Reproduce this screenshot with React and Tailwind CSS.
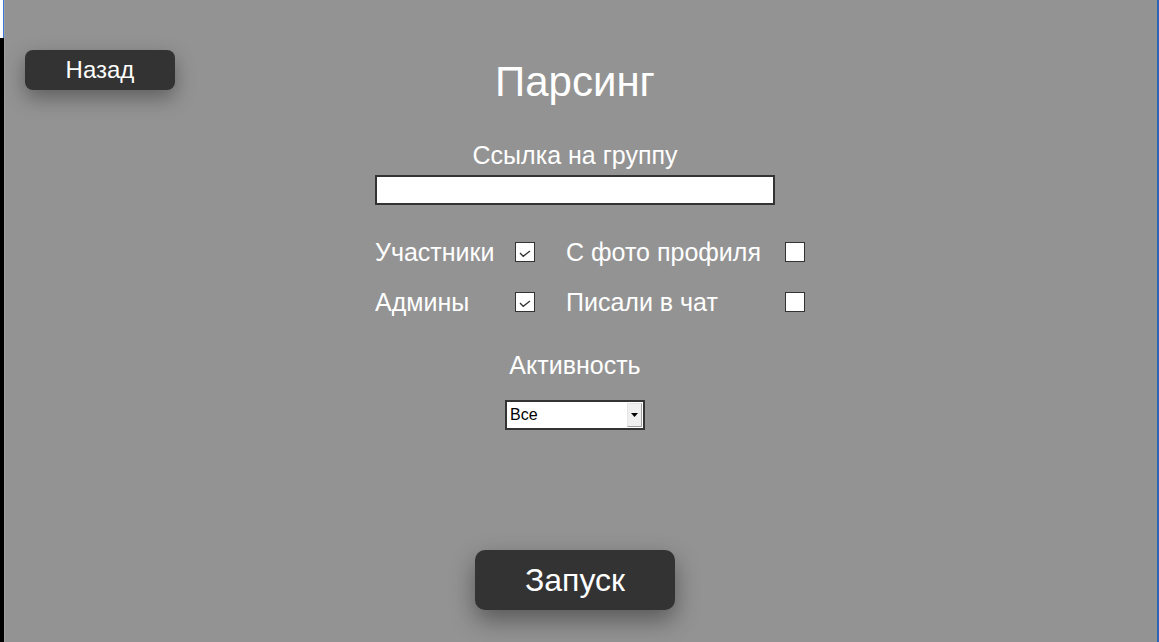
import React from "react";

function Check({ checked }) {
  return (
    <div className="w-[20px] h-[20px] border border-[#333] bg-white">
      {checked && (
        <svg width="18" height="18" viewBox="0 0 18 18">
          <path d="M4 10 L7.2 13.3 L14 8" fill="none" stroke="#333" strokeWidth="1.3" />
        </svg>
      )}
    </div>
  );
}

export default function App() {
  return (
    <div className="flex h-[642px] w-[1159px] overflow-hidden bg-[#939393] font-['Liberation_Sans',Arial,sans-serif] text-white">
      <div className="flex w-[4px] flex-col">
        <div className="h-[38px] bg-white border-r border-[#3b78d8]" />
        <div className="flex-1 bg-black" />
      </div>
      <div className="w-px bg-[#9e9e9e]" />
      <div className="grid flex-1 grid-cols-[370px_400px_1fr]">
        <div className="pl-[20px] pt-[50px]">
          <div className="flex h-[40px] w-[150px] items-center justify-center rounded-[8px] bg-[#333333] text-[24px] leading-none shadow-[0_8px_20px_rgba(0,0,0,0.35)]">
            Назад
          </div>
        </div>
        <div className="flex flex-col items-center pt-[61px]">
          <div className="h-[42px] text-[42px] leading-none">Парсинг</div>
          <div className="mt-[40px] h-[25px] text-[25px] leading-none">Ссылка на группу</div>
          <div className="mt-[7px] h-[30px] w-[400px] border-2 border-[#333] bg-white" />
          <div className="mt-[35px] grid w-full grid-cols-[140px_51px_219px_20px] gap-y-[26px] text-[25px] leading-none">
            <div className="flex h-[24px] items-center whitespace-nowrap">Участники</div>
            <div className="flex h-[24px] items-center"><Check checked /></div>
            <div className="flex h-[24px] items-center whitespace-nowrap">С фото профиля</div>
            <div className="flex h-[24px] items-center"><Check /></div>
            <div className="flex h-[24px] items-center whitespace-nowrap">Админы</div>
            <div className="flex h-[24px] items-center"><Check checked /></div>
            <div className="flex h-[24px] items-center whitespace-nowrap">Писали в чат</div>
            <div className="flex h-[24px] items-center"><Check /></div>
          </div>
          <div className="mt-[39px] h-[25px] text-[25px] leading-none">Активность</div>
          <div className="mt-[22px] flex h-[30px] w-[140px] items-stretch border-2 border-[#333] bg-white text-black">
            <div className="flex flex-1 items-center pl-[3px] text-[16px] leading-none">Все</div>
            <div className="my-[1px] mr-[1px] flex w-[15px] items-center justify-center border border-[#e4e4e4] border-b-[#a0a0a0] border-r-[#a0a0a0] bg-[#f0f0f0]">
              <svg width="7" height="4" viewBox="0 0 7 4"><path d="M0 0H7L3.5 4Z" fill="#000" /></svg>
            </div>
          </div>
          <div className="mt-[120px] flex h-[60px] w-[200px] items-center justify-center rounded-[10px] bg-[#333333] text-[32px] leading-none shadow-[0_10px_25px_rgba(0,0,0,0.4)]">
            Запуск
          </div>
        </div>
        <div />
      </div>
      <div className="w-[2px] bg-[#2b66b5]" />
    </div>
  );
}
